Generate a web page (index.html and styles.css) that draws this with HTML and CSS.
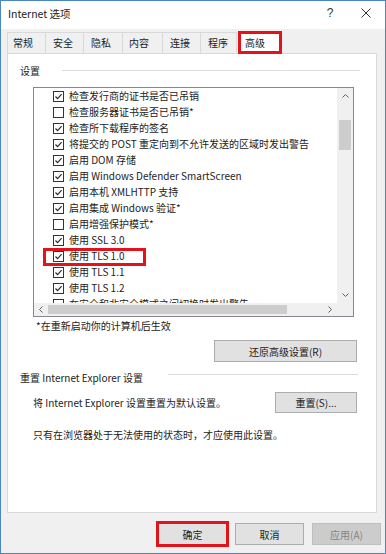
FILE: index.html
```html
<!DOCTYPE html>
<html lang="zh-CN">
<head>
    <meta charset="UTF-8">
    <title>Internet 选项</title>
    <link rel="stylesheet" href="styles.css">
</head>
<body>

<div class="window">
    <div class="titlebar">
        <span class="title">Internet 选项</span>
        <span class="help">?</span>
        <svg class="close" width="10" height="10" viewBox="0 0 10 10">
            <path d="M0.5 0.5 L9.5 9.5 M9.5 0.5 L0.5 9.5" stroke="#333" stroke-width="1" fill="none"/>
        </svg>
    </div>

    <div class="tabs">
        <div class="tab">常规</div>
        <div class="tab">安全</div>
        <div class="tab">隐私</div>
        <div class="tab">内容</div>
        <div class="tab">连接</div>
        <div class="tab">程序</div>
        <div class="tab active">高级</div>
    </div>

    <div class="panel">
        <div class="group-head">
            <span>设置</span>
            <i class="rule"></i>
        </div>

        <div class="listbox">
            <div class="rows">
                <div class="row"><span class="cb"><svg viewBox="0 0 9 9"><path d="M1.5 4.5 L3.6 6.6 L7.6 2.2"/></svg></span>检查发行商的证书是否已吊销</div>
                <div class="row"><span class="cb"></span>检查服务器证书是否已吊销*</div>
                <div class="row"><span class="cb"><svg viewBox="0 0 9 9"><path d="M1.5 4.5 L3.6 6.6 L7.6 2.2"/></svg></span>检查所下载程序的签名</div>
                <div class="row"><span class="cb"><svg viewBox="0 0 9 9"><path d="M1.5 4.5 L3.6 6.6 L7.6 2.2"/></svg></span>将提交的 POST 重定向到不允许发送的区域时发出警告</div>
                <div class="row"><span class="cb"><svg viewBox="0 0 9 9"><path d="M1.5 4.5 L3.6 6.6 L7.6 2.2"/></svg></span>启用 DOM 存储</div>
                <div class="row"><span class="cb"><svg viewBox="0 0 9 9"><path d="M1.5 4.5 L3.6 6.6 L7.6 2.2"/></svg></span>启用 Windows Defender SmartScreen</div>
                <div class="row"><span class="cb"><svg viewBox="0 0 9 9"><path d="M1.5 4.5 L3.6 6.6 L7.6 2.2"/></svg></span>启用本机 XMLHTTP 支持</div>
                <div class="row"><span class="cb"><svg viewBox="0 0 9 9"><path d="M1.5 4.5 L3.6 6.6 L7.6 2.2"/></svg></span>启用集成 Windows 验证*</div>
                <div class="row"><span class="cb"></span>启用增强保护模式*</div>
                <div class="row"><span class="cb"><svg viewBox="0 0 9 9"><path d="M1.5 4.5 L3.6 6.6 L7.6 2.2"/></svg></span>使用 SSL 3.0</div>
                <div class="row"><span class="cb"><svg viewBox="0 0 9 9"><path d="M1.5 4.5 L3.6 6.6 L7.6 2.2"/></svg></span>使用 TLS 1.0<span class="mark"></span></div>
                <div class="row"><span class="cb"><svg viewBox="0 0 9 9"><path d="M1.5 4.5 L3.6 6.6 L7.6 2.2"/></svg></span>使用 TLS 1.1</div>
                <div class="row"><span class="cb"><svg viewBox="0 0 9 9"><path d="M1.5 4.5 L3.6 6.6 L7.6 2.2"/></svg></span>使用 TLS 1.2</div>
                <div class="row"><span class="cb"></span>在安全和非安全模式之间切换时发出警告</div>
            </div>

            <div class="vscroll">
                <div class="arrow">
                    <svg width="7" height="4" viewBox="0 0 7 4"><path d="M0.5 3.5 L3.5 0.5 L6.5 3.5" stroke="#606060" fill="none"/></svg>
                </div>
                <div class="vthumb"></div>
                <div class="spacer"></div>
                <div class="arrow">
                    <svg width="7" height="4" viewBox="0 0 7 4"><path d="M0.5 0.5 L3.5 3.5 L6.5 0.5" stroke="#606060" fill="none"/></svg>
                </div>
            </div>

            <div class="hscroll">
                <div class="harrow left">
                    <svg width="4" height="7" viewBox="0 0 4 7"><path d="M3.5 0.5 L0.5 3.5 L3.5 6.5" stroke="#606060" fill="none"/></svg>
                </div>
                <div class="hthumb"></div>
                <div class="spacer"></div>
                <div class="harrow right">
                    <svg width="4" height="7" viewBox="0 0 4 7"><path d="M0.5 0.5 L3.5 3.5 L0.5 6.5" stroke="#606060" fill="none"/></svg>
                </div>
            </div>
            <div class="corner"></div>
        </div>

        <div class="note">*在重新启动你的计算机后生效</div>

        <button class="btn restore">还原高级设置(R)</button>

        <div class="group-head reset-head">
            <span>重置 Internet Explorer 设置</span>
            <i class="rule"></i>
        </div>

        <div class="reset-row">
            <span class="reset-text">将 Internet Explorer 设置重置为默认设置。</span>
            <button class="btn reset">重置(S)...</button>
        </div>

        <div class="info">只有在浏览器处于无法使用的状态时，才应使用此设置。</div>
    </div>

    <div class="footer">
        <button class="btn ok">确定</button>
        <button class="btn">取消</button>
        <button class="btn" disabled>应用(A)</button>
    </div>
</div>

</body>
</html>
```

FILE: styles.css
```css
* {
    box-sizing: border-box;
}
body {
    margin: 0;
    font-family: "Noto Sans CJK SC", "Microsoft YaHei", sans-serif;
    font-size: 10px;
    color: #222;
    background-color: #f0f0f0;
}
.window {
    width: 386px;
    height: 554px;
    border: 1px solid #4a86c0;
    background-color: #f0f0f0;
    display: flex;
    flex-direction: column;
}

/* title */
.titlebar {
    height: 28px;
    flex-shrink: 0;
    background-color: #fff;
    display: flex;
    align-items: center;
    padding: 0 14px 4px 7px;
}
.title {
    flex: 1;
    font-size: 10.5px;
}
.help {
    width: 12px;
    text-align: center;
    font-family: "Liberation Sans", sans-serif;
    font-size: 12px;
    color: #333;
}
.close {
    margin-left: 25px;
}

/* tabs */
.tabs {
    height: 22px;
    margin-top: 2px;
    padding-left: 6px;
    display: flex;
    align-items: flex-end;
    flex-shrink: 0;
}
.tab {
    height: 21px;
    line-height: 20px;
    padding-left: 6px;
    border: 1px solid #d9d9d9;
    border-bottom: none;
    border-right: none;
    background-color: #f0f0f0;
}
.tab:nth-child(1) { width: 38px; padding-left: 5px; }
.tab:nth-child(2) { width: 38px; padding-left: 7px; }
.tab:nth-child(3) { width: 39px; padding-left: 7px; }
.tab:nth-child(4) { width: 40px; }
.tab:nth-child(5) { width: 38px; padding-left: 7px; }
.tab:nth-child(6) { width: 37px; padding-left: 7px; border-right: 1px solid #d9d9d9; }
.tab.active {
    width: 44px;
    height: 23px;
    line-height: 21px;
    margin-left: 1px;
    margin-bottom: -1px;
    border-right: 1px solid #d9d9d9;
    background-color: #fff;
    position: relative;
    z-index: 1;
    outline: 3px solid #e3131b;
    outline-offset: -3px;
}

/* panel */
.panel {
    height: 460px;
    margin: 0 8px 0 6px;
    border: 1px solid #d9d9d9;
    background-color: #fff;
    flex-shrink: 0;
}
.group-head {
    height: 16px;
    margin: 8px 16px 0 12px;
    display: flex;
    align-items: center;
}
.rule {
    flex: 1;
    height: 1px;
    margin-left: 22px;
    background-color: #dcdcdc;
}
.reset-head {
    margin-top: 7px;
    margin-right: 18px;
}
.reset-head .rule {
    margin-left: 25px;
    margin-top: -5px;
}

/* list */
.listbox {
    width: 321px;
    height: 230px;
    margin: 9px 0 0 25px;
    border: 1px solid #828790;
    display: grid;
    grid-template-columns: 1fr 16px;
    grid-template-rows: 1fr 13px;
}
.rows {
    overflow: hidden;
}
.row {
    height: 16px;
    line-height: 16px;
    padding-left: 19px;
    display: flex;
    align-items: center;
    white-space: nowrap;
    position: relative;
}
.cb {
    width: 11px;
    height: 11px;
    margin-right: 5px;
    flex-shrink: 0;
    border: 1px solid #333;
    background-color: #fff;
}
.cb svg {
    display: block;
    width: 9px;
    height: 9px;
}
.cb path {
    fill: none;
    stroke: #222;
    stroke-width: 1.1;
}
.mark {
    position: absolute;
    left: 9px;
    top: 0;
    width: 103px;
    height: 18px;
    border: 3px solid #e3131b;
}
.vscroll {
    background-color: #f0f0f0;
    display: flex;
    flex-direction: column;
}
.arrow {
    height: 16px;
    display: flex;
    align-items: center;
    justify-content: center;
}
.vthumb {
    height: 30px;
    margin: 16px 2px 0;
    background-color: #cdcdcd;
}
.spacer {
    flex: 1;
}
.hscroll {
    background-color: #f0f0f0;
    display: flex;
    align-items: center;
}
.harrow {
    height: 13px;
    display: flex;
    align-items: center;
    justify-content: center;
}
.harrow.left {
    width: 14px;
}
.harrow.right {
    width: 15px;
}
.hthumb {
    width: 239px;
    height: 9px;
    background-color: #cdcdcd;
}
.corner {
    background-color: #f0f0f0;
}

.note {
    margin: 2px 0 0 28px;
    line-height: 14px;
}

/* buttons */
.btn {
    font-family: inherit;
    font-size: 10px;
    color: #222;
    background-color: #e1e1e1;
    border: 1px solid #adadad;
    padding: 0;
}
.btn:disabled {
    color: #838383;
    background-color: #cccccc;
    border-color: #bfbfbf;
}
.restore {
    display: block;
    width: 143px;
    height: 22px;
    margin: 7px 19px 0 auto;
}
.reset-row {
    height: 21px;
    margin: 7px 19px 0 25px;
    display: flex;
    align-items: center;
}
.reset-text {
    flex: 1;
}
.reset {
    width: 82px;
    height: 21px;
}
.info {
    margin: 15px 0 0 25px;
    line-height: 14px;
}

.footer {
    flex: 1;
    display: flex;
    justify-content: flex-end;
    gap: 8px;
    padding: 10px 4px 0 0;
}
.footer .btn {
    width: 69px;
    height: 22px;
}
.ok {
    outline: 3px solid #e3131b;
    outline-offset: -1px;
}
```
